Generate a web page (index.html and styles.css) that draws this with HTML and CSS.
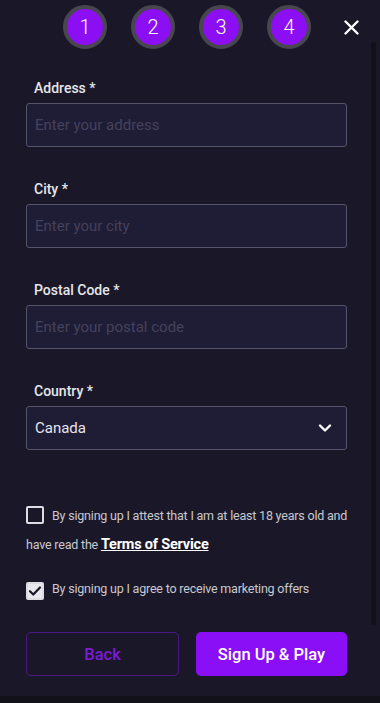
FILE: index.html
```html
<!DOCTYPE html>
<html lang="en">
<head>
  <meta charset="UTF-8" />
  <meta name="viewport" content="width=device-width, initial-scale=1.0"/>
  <title>Sign Up</title>
  <link rel="stylesheet" href="styles.css">
</head>
<body>

  <div class="modal">
    <div class="steps">
      <div class="step">1</div>
      <div class="step">2</div>
      <div class="step">3</div>
      <div class="step">4</div>
      <button class="close-btn" aria-label="Close">
        <svg width="15" height="15" viewBox="0 0 15 15">
          <path d="M1.5 1.5 L13.5 13.5 M13.5 1.5 L1.5 13.5" stroke="#fff" stroke-width="2.4" stroke-linecap="round"/>
        </svg>
      </button>
    </div>

    <form class="form">
      <div class="field">
        <label>Address *</label>
        <input type="text" placeholder="Enter your address">
      </div>
      <div class="field">
        <label>City *</label>
        <input type="text" placeholder="Enter your city">
      </div>
      <div class="field">
        <label>Postal Code *</label>
        <input type="text" placeholder="Enter your postal code">
      </div>
      <div class="field">
        <label>Country *</label>
        <div class="select">
          <span>Canada</span>
          <svg width="14" height="10" viewBox="0 0 14 10">
            <path d="M2 2.5 L7 7.5 L12 2.5" fill="none" stroke="#fff" stroke-width="2.4" stroke-linecap="round" stroke-linejoin="round"/>
          </svg>
        </div>
      </div>

      <div class="consent">
        <p class="check-line">
          <span class="box"></span>By signing up I attest that I am at least 18 years old and<br>have read the <a href="#">Terms of Service</a>
        </p>
        <p class="check-line second">
          <span class="box checked">
            <svg width="14" height="12" viewBox="0 0 14 12">
              <path d="M2 6.2 L5.3 9.5 L12 2.5" fill="none" stroke="#1a1828" stroke-width="2.2" stroke-linecap="round" stroke-linejoin="round"/>
            </svg>
          </span>By signing up I agree to receive marketing offers
        </p>
      </div>

      <div class="actions">
        <button type="button" class="back-btn">Back</button>
        <button type="button" class="play-btn">Sign Up &amp; Play</button>
      </div>
    </form>

    <div class="scroll-track"></div>
  </div>
  <div class="bottom-bar"></div>

</body>
</html>
```

FILE: styles.css
```css
* {
  box-sizing: border-box;
  margin: 0;
  padding: 0;
  font-family: Roboto, "Liberation Sans", sans-serif;
}

body {
  background: #1a1828;
  width: 380px;
  height: 703px;
  overflow: hidden;
}

.modal {
  position: relative;
  height: 696px;
  background: #1a1828;
}

.steps {
  display: flex;
  align-items: center;
  height: 50px;
  padding: 3px 0 0 63px;
}

.step {
  width: 44px;
  height: 44px;
  border-radius: 50%;
  border: 4px solid #48474f;
  background: #8b0ff2;
  color: #fff;
  font-size: 20px;
  font-weight: 300;
  display: flex;
  align-items: center;
  justify-content: center;
  margin-right: 24px;
}

.close-btn {
  background: none;
  border: none;
  margin-left: 9px;
  margin-top: 2px;
  display: flex;
  cursor: pointer;
}

.form {
  padding: 28px 33px 0 26px;
}

.field {
  margin-bottom: 32px;
}

.field label {
  display: block;
  padding-left: 8px;
  height: 20px;
  line-height: 20px;
  margin-bottom: 5px;
  color: #e6e6ea;
  font-size: 14px;
  font-weight: 500;
}

.field input,
.select {
  width: 100%;
  height: 44px;
  background: #1f1c36;
  border: 1.5px solid #56546b;
  border-radius: 3px;
  padding: 0 8px;
  font-size: 15px;
  color: #fff;
  outline: none;
}

.field input::placeholder {
  color: #44425c;
}

.select {
  display: flex;
  align-items: center;
  justify-content: space-between;
  padding-right: 14px;
  color: #e6e6ea;
}

.consent {
  padding-top: 19px;
  margin-right: -12px;
}

.check-line {
  font-size: 12.5px;
  letter-spacing: -0.2px;
  line-height: 29px;
  color: #c9c8d0;
  white-space: nowrap;
}

.check-line.second {
  margin-top: 15px;
}

.box {
  display: inline-flex;
  align-items: center;
  justify-content: center;
  width: 18px;
  height: 18px;
  border: 2px solid #dcdce2;
  border-radius: 2px;
  margin-right: 8px;
  vertical-align: -4px;
}

.box.checked {
  background: #e8e8ee;
}

.check-line a {
  color: #fff;
  font-size: 14.5px;
  font-weight: 700;
  letter-spacing: -0.2px;
  text-decoration: underline;
}

.actions {
  display: flex;
  gap: 17px;
  margin-top: 29px;
}

.actions button {
  flex: 1;
  height: 44px;
  border-radius: 5px;
  font-size: 16.5px;
  font-weight: 500;
  cursor: pointer;
}

.back-btn {
  background: transparent;
  border: 1.5px solid #4a1885;
  color: #7d1ad6;
}

.play-btn {
  background: #8a0ff7;
  border: none;
  color: #fff;
}

.scroll-track {
  position: absolute;
  right: 4px;
  top: 42px;
  width: 5px;
  height: 583px;
  border-radius: 3px;
  background: #121119;
}

.bottom-bar {
  height: 7px;
  background: #121119;
}
```
